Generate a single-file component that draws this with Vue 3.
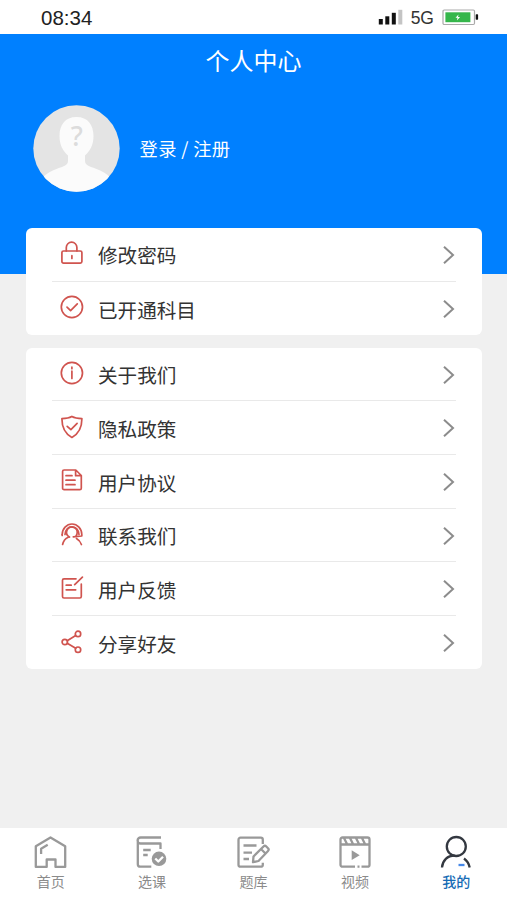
<script setup>
const groups = [
  [
    { icon: 'lock', label: '修改密码' },
    { icon: 'check', label: '已开通科目' },
  ],
  [
    { icon: 'info', label: '关于我们' },
    { icon: 'shield', label: '隐私政策' },
    { icon: 'doc', label: '用户协议' },
    { icon: 'service', label: '联系我们' },
    { icon: 'feedback', label: '用户反馈' },
    { icon: 'share', label: '分享好友' },
  ],
]
const tabs = [
  { icon: 'home', label: '首页' },
  { icon: 'course', label: '选课' },
  { icon: 'bank', label: '题库' },
  { icon: 'video', label: '视频' },
  { icon: 'mine', label: '我的', active: true },
]
</script>

<template>
  <div class="page">
    <div class="status">
      <span class="time">08:34</span>
      <div class="status-right">
        <svg class="signal" width="26" height="17" viewBox="0 0 26 17">
          <rect x="0.8" y="10" width="4" height="5.5" fill="#111" />
          <rect x="7.3" y="7.3" width="4" height="8.2" fill="#111" />
          <rect x="13.8" y="3.8" width="4" height="11.7" fill="#111" />
          <rect x="20.3" y="0.8" width="4" height="14.7" fill="#c4c4c4" />
        </svg>
        <span class="net">5G</span>
        <svg class="battery" width="38" height="17" viewBox="0 0 38 17">
          <rect x="1" y="1" width="31.5" height="14.5" rx="1.2" fill="#fff" stroke="#aaa" stroke-width="1.2" />
          <rect x="3.4" y="3.3" width="25" height="9.9" fill="#35b64b" />
          <path d="M16.500 5.400l-3 3.300h2l-.6 2.800 3.200-3.600h-2.100z" fill="#fff" />
          <rect x="33.7" y="5.3" width="2.4" height="5.4" rx=".7" fill="#111" />
        </svg>
      </div>
    </div>

    <header class="hero">
      <h1>个人中心</h1>
      <div class="profile">
        <svg class="avatar" width="87" height="87" viewBox="0 0 87 87">
          <defs>
            <clipPath id="face"><circle cx="43.5" cy="43.5" r="43.2" /></clipPath>
          </defs>
          <g clip-path="url(#face)">
            <rect width="87" height="87" fill="#e4e4e4" />
            <path d="M43.500 12C32 12 26.500 20 26.500 31c0 9 3.500 15 8.500 19.500V56c0 3-2 4.500-6 6C20 65 15 67 9 73v15h69V73c-6-6-11-8-20-11-4-1.500-6-3-6-6v-5.500C57 46 60.500 40 60.500 31c0-11-5.500-19-17-19z" fill="#fbfbfb" />
          </g>
          <text x="43.700" y="40.500" text-anchor="middle" class="question">?</text>
        </svg>
        <span class="login">登录 / 注册</span>
      </div>
    </header>

    <main>
      <section v-for="(group, g) in groups" :key="g" class="card">
        <div v-for="item in group" :key="item.icon" class="row">
          <svg class="row-icon" width="24" height="24" viewBox="0 0 24 24">
            <g v-if="item.icon === 'lock'">
              <rect x="1.900" y="10" width="20" height="12.200" rx="1.600" />
              <path d="M6.300 10V6.500a5.300 5.300 0 0 1 10.600 0V10M11.900 14.700v2.800" />
            </g>
            <g v-else-if="item.icon === 'check'">
              <circle cx="11.900" cy="12" r="10.600" />
              <path d="M7 12.200l3.600 3.500 6.700-6.800" />
            </g>
            <g v-else-if="item.icon === 'info'">
              <circle cx="11.900" cy="12" r="10.600" />
              <path d="M11.900 10.200v7.300M11.900 6.200v1.500" />
            </g>
            <g v-else-if="item.icon === 'shield'">
              <path d="M11.900 1.400C9 3 5.500 3.500 1.900 3.700c0 8.300 2.100 14.400 10 18.700 7.900-4.300 10-10.400 10-18.700-3.600-.2-7.100-.7-10-2.300z" />
              <path d="M7.200 11.300l3.700 3.400 6.200-6.300" />
            </g>
            <g v-else-if="item.icon === 'doc'">
              <path d="M4.100 2h11.700l5.500 5.500v12.700a1.500 1.500 0 0 1-1.500 1.500H4.100a1.500 1.500 0 0 1-1.500-1.500V3.500A1.500 1.500 0 0 1 4.100 2zM15.600 2v5.700h5.700M6 7.700h6M6 12.200h9M6 16.700h9" />
            </g>
            <g v-else-if="item.icon === 'service'">
              <path d="M2.200 12.500a9.800 10.500 0 0 1 19.600 0v1.500l-8.500.8" />
              <path d="M2.200 12.500v1M5 12.500a7 7.700 0 0 1 14 0" />
              <path d="M17.200 10.500A5.300 5.300 0 1 0 9.500 15M17.200 10.500c0 1.300-.4 2.500-1.200 3.500M8.300 15.200c-3.200 1.400-5 4-5.700 7.300M16.500 16.500c2.500 1.400 4 3.500 4.900 6" />
            </g>
            <g v-else-if="item.icon === 'feedback'">
              <path d="M16 2.800H4a1.500 1.500 0 0 0-1.500 1.500v16.200A1.500 1.500 0 0 0 4 22h15.800a1.500 1.500 0 0 0 1.500-1.500V8M6.200 9.200h5M6.200 13.800h9.500M14.700 8.700l7.700-7.500" />
            </g>
            <g v-else>
              <circle cx="4.800" cy="12" r="2.700" />
              <circle cx="18" cy="3.900" r="2.700" />
              <circle cx="18" cy="19.700" r="2.700" />
              <path d="M7.200 10.700l8.500-5.200M7.200 13.300l8.500 5" />
            </g>
          </svg>
          <span class="label">{{ item.label }}</span>
          <svg class="chevron" width="14" height="20" viewBox="0 0 14 20">
            <path d="M2 1.800l9 8.200-9 8.200" />
          </svg>
        </div>
      </section>
    </main>

    <nav class="tabs">
      <div v-for="tab in tabs" :key="tab.icon" class="tab" :class="{ active: tab.active }">
        <svg class="tab-icon" width="34" height="34" viewBox="0 0 34 34">
          <g v-if="tab.icon === 'home'">
            <path d="M1.800 11.300L16.500 2.500l14.700 8.800v20.600h-9.700v-7.400h-8.800v7.400H1.800zM7.100 19v-5.300l6.600-3.900" />
          </g>
          <g v-else-if="tab.icon === 'course'">
            <path d="M26 2.500H5.600a3 3 0 0 0 0 6h19.900v5.500M2.800 5.500v23.700a2.500 2.500 0 0 0 2.500 2.500h11M8.200 15h7.500M8.200 20h4.500" />
            <circle cx="24" cy="23.800" r="7.300" class="solid" />
            <path d="M20.300 23.500l3 3 4.700-4.700" class="cut" />
          </g>
          <g v-else-if="tab.icon === 'bank'">
            <path d="M25.800 9V4.700a2 2 0 0 0-2-2H3.500a2 2 0 0 0-2 2v25a2 2 0 0 0 2 2h20.300a2 2 0 0 0 2-2v-2M6.500 10.500h13M6.500 17.700h8.500M6.500 24h5.500" />
            <path d="M16.500 21.500L26.500 11.500a2 2 0 0 1 2.800 0l1.700 1.700a2 2 0 0 1 0 2.800L21.500 26l-5.500 1.200zM24 14l4.500 4.500" />
          </g>
          <g v-else-if="tab.icon === 'video'">
            <path d="M17 31.700H4.500a2 2 0 0 1-2-2V4.500a2 2 0 0 1 2-2h25a2 2 0 0 1 2 2v25.200a2 2 0 0 1-2 2h-6M19.500 31.700h2M2.500 9.500h29M6 3l3 6M12 3l3 6M18 3l3 6M24 3l3 6" />
            <path d="M13.700 15.300v9.800l8-4.900z" class="solid" />
          </g>
          <g v-else>
            <circle cx="17.300" cy="11.500" r="9.500" />
            <path d="M3 32.500c.5-7 5.500-12 12.500-12M25 23.500c3.300 2.400 5 5.500 5.700 9" />
            <path d="M19.500 30h6" class="accent" />
          </g>
        </svg>
        <span>{{ tab.label }}</span>
      </div>
    </nav>
  </div>
</template>

<style>
body {
  margin: 0;
}
</style>

<style scoped>
.page {
  display: flex;
  flex-direction: column;
  width: 507px;
  height: 900px;
  overflow: hidden;
  background: #f0f0f0;
  font-family: "Noto Sans CJK SC", sans-serif;
}
.status {
  display: flex;
  flex: none;
  align-items: center;
  justify-content: space-between;
  box-sizing: border-box;
  height: 33.500px;
  padding: 2px 27px 0 41px;
  background: #fff;
  color: #222;
  font-family: "Liberation Sans", sans-serif;
}
.time {
  font-size: 20.500px;
}
.status-right {
  display: flex;
  align-items: center;
}
.net {
  margin: 2px 8px 0 6.500px;
  font-size: 17.500px;
  color: #333;
}
.hero {
  flex: none;
  height: 240.500px;
  background: #0080ff;
  color: #fff;
}
h1 {
  margin: 0;
  padding-top: 8px;
  font-size: 24px;
  line-height: 36px;
  font-weight: 400;
  text-align: center;
}
.profile {
  display: flex;
  align-items: center;
  gap: 20px;
  margin: 27px 0 0 32.500px;
}
.question {
  fill: #dcdcdc;
  font: 500 27px "Noto Sans", sans-serif;
}
.login {
  font-size: 18.300px;
  letter-spacing: 0.350px;
}
main {
  display: flex;
  flex: 1;
  flex-direction: column;
  gap: 12.700px;
  margin: -46px 25px 0 26px;
}
.card {
  padding: 0 26px;
  border-radius: 6px;
  background: #fff;
}
.row {
  display: flex;
  align-items: center;
  box-sizing: border-box;
  height: 53.600px;
  padding-left: 8px;
}
.row:not(:last-child) {
  border-bottom: 1.500px solid #e9e9e9;
}
.row-icon {
  margin-bottom: 2px;
  fill: none;
  stroke: #d0544f;
  stroke-width: 1.700;
  stroke-linecap: round;
  stroke-linejoin: round;
}
.label {
  flex: 1;
  margin: 2.400px 0 0 14px;
  color: #333;
  font-size: 19.600px;
  line-height: 30px;
}
.chevron {
  margin-top: 1.200px;
  fill: none;
  stroke: #8c8c8c;
  stroke-width: 2;
}
.tabs {
  display: flex;
  flex: none;
  height: 72.500px;
  background: #fff;
}
.tab {
  display: flex;
  flex: 1;
  flex-direction: column;
  align-items: center;
  padding-top: 7.500px;
  color: #8b8b8b;
  font-size: 14px;
  line-height: 20px;
}
.tab span {
  margin-top: 2px;
}
.tab-icon {
  fill: none;
  stroke: #999;
  stroke-width: 2.300;
  stroke-linejoin: round;
}
.tab-icon .solid {
  fill: #999;
  stroke: none;
}
.tab-icon .cut {
  stroke: #fff;
}
.active {
  color: #176cb5;
  font-weight: 500;
}
.active .tab-icon {
  stroke: #333840;
}
.tab-icon .accent {
  stroke: #4688e8;
}
</style>
